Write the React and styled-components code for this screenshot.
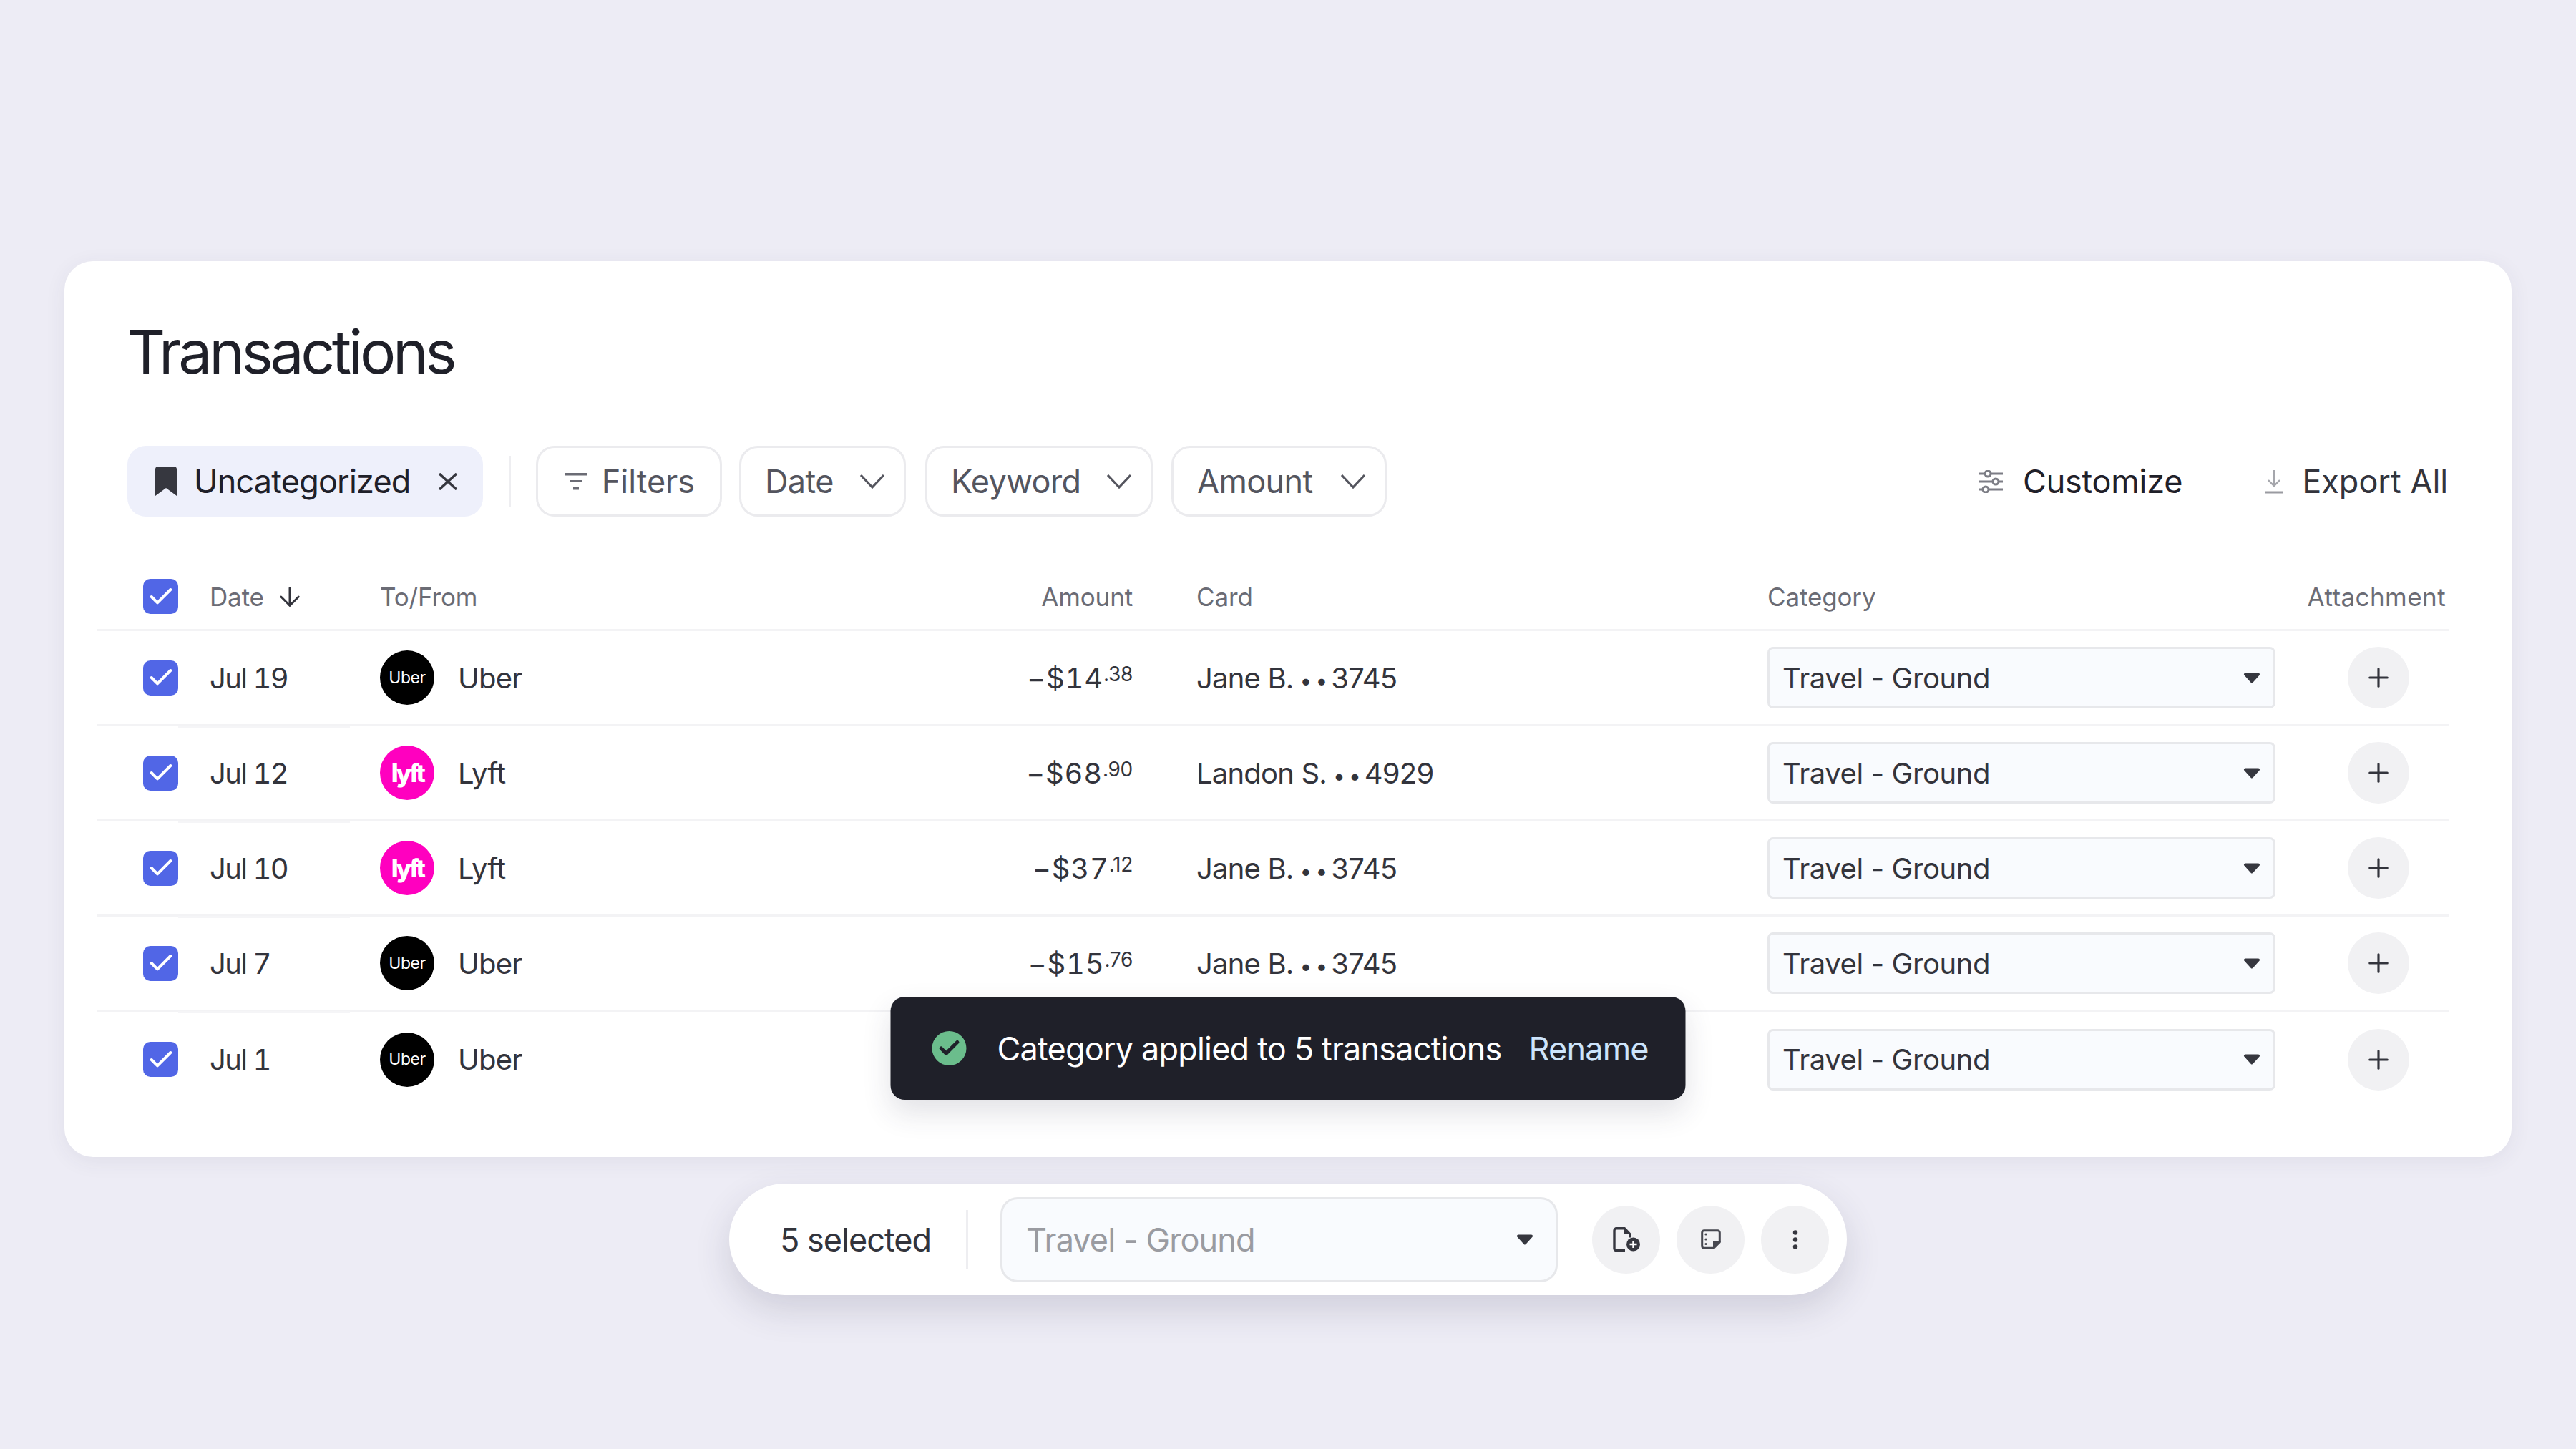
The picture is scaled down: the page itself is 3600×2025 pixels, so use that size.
import React from 'react';
import styled, { createGlobalStyle } from 'styled-components';
import { Check, Plus, ArrowDown } from 'lucide-react';

const GlobalStyle = createGlobalStyle`
  html, body {
    margin: 0;
    padding: 0;
    background: #edecf5;
  }
  body {
    font-family: Inter, "Liberation Sans", sans-serif;
    color: #33343c;
  }
`;

const Page = styled.div`
  width: 3600px;
  height: 2025px;
  padding-top: 365px;
  box-sizing: border-box;
  display: flex;
  flex-direction: column;
  align-items: center;
`;

const Card = styled.section`
  position: relative;
  width: 3420px;
  height: 1252px;
  box-sizing: border-box;
  padding: 77px 87px 0 45px;
  background: #fff;
  border-radius: 40px;
  box-shadow: 0 6px 30px rgba(50, 50, 80, 0.07);
`;

const Title = styled.h1`
  margin: 0;
  padding-left: 42px;
  font-size: 84px;
  line-height: 100px;
  font-weight: 400;
  letter-spacing: -0.052em;
  color: #1f2029;
`;

const Toolbar = styled.div`
  display: flex;
  align-items: center;
  height: 99px;
  margin-top: 81px;
  padding-left: 43px;
`;

const ActiveChip = styled.button`
  display: flex;
  align-items: center;
  flex-shrink: 0;
  width: 497px;
  height: 99px;
  padding: 0 35px 0 39px;
  box-sizing: border-box;
  border: 0;
  border-radius: 26px;
  background: #eef0fb;
  font: inherit;
  font-size: 45px;
  letter-spacing: -0.018em;
  color: #1f2029;

  svg:first-child {
    margin-right: 24px;
  }
  svg:last-child {
    margin-left: auto;
  }
`;

const VDivider = styled.span`
  display: block;
  flex-shrink: 0;
  width: 3px;
  height: ${(p) => p.$h}px;
  background: #eeeef1;
  margin: 0 ${(p) => p.$right}px 0 ${(p) => p.$left}px;
`;

const FilterButton = styled.button`
  display: flex;
  align-items: center;
  justify-content: space-between;
  flex-shrink: 0;
  width: ${(p) => p.$w}px;
  height: 99px;
  box-sizing: border-box;
  margin-right: ${(p) => p.$gap || 0}px;
  padding: 0 ${(p) => p.$pr || 26}px 0 ${(p) => p.$pl || 33}px;
  border: 3px solid #ebebee;
  border-radius: 26px;
  background: #fff;
  font: inherit;
  font-size: 45px;
  letter-spacing: ${(p) => p.$ls || '-0.014em'};
  color: #54555e;
`;

const ToolAction = styled.a`
  display: flex;
  align-items: center;
  flex-shrink: 0;
  gap: ${(p) => p.$gap}px;
  margin-left: ${(p) => p.$left || 0}px;
  font-size: 45px;
  white-space: nowrap;
  letter-spacing: ${(p) => p.$ls};
  color: ${(p) => p.$color};
`;

const Table = styled.div`
  margin-top: 68px;
`;

const rowColumns = `
  display: grid;
  grid-template-columns: 93px 238px 500px 552px 887px 710px 1fr;
  padding-left: 65px;
  align-items: center;
  box-sizing: border-box;
`;

const HeadRow = styled.div`
  ${rowColumns}
  height: 92px;
  padding-bottom: 2px;
  border-bottom: 3px solid #f3f3f5;
  font-size: 35px;
  letter-spacing: -0.004em;
  color: #6b6c75;
`;

const Row = styled.div`
  ${rowColumns}
  position: relative;
  height: 133px;
  border-bottom: ${(p) => (p.$last ? '0' : '3px solid #f3f3f5')};
  font-size: 40px;
  letter-spacing: -0.02em;
  color: #33343c;
`;

const DateEdge = styled.span`
  position: absolute;
  left: 114px;
  bottom: -5px;
  width: 240px;
  height: 3px;
  background: #f5f5f7;
`;

const CheckBox = styled.span`
  display: flex;
  align-items: center;
  justify-content: center;
  width: 49px;
  height: 49px;
  border-radius: 10px;
  background: #5166e6;
  color: #fff;
`;

const DateHead = styled.span`
  display: flex;
  align-items: center;
  gap: 15px;
  color: #6b6c75;

  svg {
    color: #33343c;
  }
`;

const RowDate = styled.span`
  font-variant-numeric: tabular-nums;
  letter-spacing: -0.04em;
`;

const Merchant = styled.span`
  display: flex;
  align-items: center;
  gap: 33px;
`;

const LogoCircle = styled.span`
  display: flex;
  align-items: center;
  justify-content: center;
  width: 76px;
  height: 76px;
  border-radius: 50%;
  background: ${(p) => (p.$kind === 'lyft' ? '#ff00bf' : '#000')};
  color: #fff;
  font-size: ${(p) => (p.$kind === 'lyft' ? 35 : 23)}px;
  font-weight: ${(p) => (p.$kind === 'lyft' ? 800 : 400)};
  letter-spacing: ${(p) => (p.$kind === 'lyft' ? '-0.1em' : '-0.02em')};
  line-height: 1;
`;

const RightCell = styled.span`
  text-align: right;
`;

const Dollars = styled.span`
  font-variant-numeric: tabular-nums;
  letter-spacing: 0.02em;
`;

const Cents = styled.sup`
  font-size: 28px;
  line-height: 0;
  vertical-align: 10px;
  letter-spacing: -0.01em;
`;

const CardCell = styled.span`
  padding-left: 89px;
`;

const Dots = styled.span`
  margin: 0 0 0 9px;
  font-size: 30px;
  letter-spacing: 5px;
`;

const Select = styled.div`
  display: flex;
  align-items: center;
  justify-content: space-between;
  box-sizing: border-box;
  height: ${(p) => p.$h}px;
  width: ${(p) => p.$w}px;
  padding: 0 ${(p) => p.$pr}px 0 ${(p) => p.$pl}px;
  border: 3px solid #e7e8eb;
  border-radius: ${(p) => p.$r}px;
  background: #f9fbfe;
  color: ${(p) => p.$color};
  font-size: ${(p) => p.$size}px;
  letter-spacing: ${(p) => p.$ls};
`;

const HeadRight = styled.span`
  text-align: right;
  padding-right: 5px;
  letter-spacing: 0.012em;
`;

const AttachCell = styled.span`
  display: flex;
  justify-content: flex-end;
  padding-right: 56px;
`;

const RoundButton = styled.button`
  display: flex;
  align-items: center;
  justify-content: center;
  width: ${(p) => p.$size}px;
  height: ${(p) => p.$size}px;
  padding: 0;
  border: 0;
  border-radius: 50%;
  background: #f1f1f3;
  color: #33343c;
`;

const Toast = styled.div`
  position: absolute;
  left: 50%;
  bottom: 80px;
  transform: translateX(-50%);
  display: flex;
  align-items: center;
  width: 1111px;
  height: 144px;
  box-sizing: border-box;
  padding-left: 58px;
  background: #1f2029;
  border-radius: 20px;
  box-shadow: 0 18px 40px rgba(50, 50, 80, 0.14);
  font-size: 45px;
  letter-spacing: -0.018em;
  color: #fff;
`;

const ToastCheck = styled.span`
  display: flex;
  align-items: center;
  justify-content: center;
  width: 48px;
  height: 48px;
  margin-right: 43px;
  border-radius: 50%;
  background: #6bbd8c;
  color: #1f2029;
`;

const Rename = styled.a`
  margin-left: 38px;
  color: #cde4fb;
`;

const Bar = styled.div`
  display: flex;
  align-items: center;
  width: 1562px;
  height: 156px;
  box-sizing: border-box;
  margin-top: 37px;
  padding: 0 24px 0 71px;
  background: #fff;
  border-radius: 78px;
  box-shadow: 0 20px 50px rgba(50, 50, 80, 0.16);
`;

const SelectedCount = styled.span`
  width: 210px;
  font-size: 45px;
  letter-spacing: -0.022em;
  white-space: nowrap;
  color: #33343c;
`;

const BarButtons = styled.div`
  display: flex;
  gap: 23px;
  margin-left: 48px;
`;

const SmallCaret = ({ w = 24, h = 15 }) => (
  <svg width={w} height={h} viewBox="0 0 24 15">
    <path d="M3 2.500h18L12 12.500z" fill="#36373f" stroke="#36373f" strokeWidth="4" strokeLinejoin="round" />
  </svg>
);

const Chevron = () => (
  <svg width="36" height="22" viewBox="0 0 36 22" fill="none" stroke="#54555e" strokeWidth="3.2">
    <path d="M2 2l16 17L34 2" />
  </svg>
);

const Bookmark = () => (
  <svg width="30" height="41" viewBox="0 0 30 41">
    <path d="M0 4a4 4 0 0 1 4-4h22a4 4 0 0 1 4 4v37L15 30 0 41z" fill="#36373f" />
  </svg>
);

const CloseIcon = () => (
  <svg width="28" height="24" viewBox="0 0 28 24" fill="none" stroke="#36373f" strokeWidth="3.4">
    <path d="M2 1l24 22M26 1L2 23" />
  </svg>
);

const FilterIcon = () => (
  <svg width="30" height="24" viewBox="0 0 30 24" fill="#6b6c75">
    <rect x="0" y="0" width="30" height="3.500" />
    <rect x="6" y="10" width="18" height="3" />
    <rect x="11" y="20" width="8" height="3.500" />
  </svg>
);

const SlidersIcon = () => (
  <svg width="34" height="32" viewBox="0 0 34 32" fill="none" stroke="#7c7d85" strokeWidth="3">
    <path d="M0 5h9M17 5h17M0 16h20M28 16h6M0 27h6M14 27h20" />
    <circle cx="13" cy="5" r="4" />
    <circle cx="24" cy="16" r="4" />
    <circle cx="10" cy="27" r="4" />
  </svg>
);

const ExportIcon = () => (
  <svg width="26" height="34" viewBox="0 0 26 34" fill="none" stroke="#a5a6ac" strokeWidth="2.400">
    <path d="M13 1v22M5 15l8 8 8-8" />
    <path d="M0 32h26" stroke="#9a9ba1" strokeWidth="3" />
  </svg>
);

const FileAddIcon = () => (
  <svg width="38" height="34" viewBox="0 0 38 34">
    <path d="M17 1.800H5a3 3 0 0 0-3 3v25a3 3 0 0 0 3 3h12" fill="none" stroke="#36373f" strokeWidth="3.400" />
    <path d="M15 .1h2l8 8.500v6h-3V9.500h-7z" fill="#36373f" />
    <circle cx="28.500" cy="24" r="9.500" fill="#36373f" />
    <path d="M28.500 19v10M23.500 24h10" stroke="#fff" strokeWidth="2.400" />
  </svg>
);

const NoteIcon = () => (
  <svg width="28" height="28" viewBox="0 0 28 28">
    <path d="M4.500 1.700h19a2.800 2.800 0 0 1 2.800 2.800v13.500l-8.300 8.300H4.500a2.800 2.800 0 0 1-2.800-2.800v-19a2.800 2.800 0 0 1 2.800-2.800z" fill="none" stroke="#46474f" strokeWidth="3" strokeLinejoin="round" />
    <path d="M17 27v-10h11z" fill="#46474f" />
    <circle cx="7" cy="7" r="1.600" fill="#46474f" />
    <circle cx="7" cy="14" r="1.600" fill="#46474f" />
    <circle cx="7" cy="20.500" r="1.600" fill="#46474f" />
  </svg>
);

const MoreIcon = () => (
  <svg width="8" height="27" viewBox="0 0 8 27" fill="#36373f">
    <circle cx="4" cy="3.500" r="3.200" />
    <circle cx="4" cy="13.500" r="3.200" />
    <circle cx="4" cy="23.500" r="3.200" />
  </svg>
);

const rows = [
  { date: 'Jul 19', name: 'Uber', dollars: '−$14', cents: '.38', holder: 'Jane B.', last4: '3745' },
  { date: 'Jul 12', name: 'Lyft', dollars: '−$68', cents: '.90', holder: 'Landon S.', last4: '4929' },
  { date: 'Jul 10', name: 'Lyft', dollars: '−$37', cents: '.12', holder: 'Jane B.', last4: '3745' },
  { date: 'Jul 7', name: 'Uber', dollars: '−$15', cents: '.76', holder: 'Jane B.', last4: '3745' },
  { date: 'Jul 1', name: 'Uber', dollars: '', cents: '', holder: '', last4: '' },
];

const Tick = () => <Check size={40} strokeWidth={2.4} />;

export default function App() {
  return (
    <Page>
      <GlobalStyle />
      <Card>
        <Title>Transactions</Title>
        <Toolbar>
          <ActiveChip>
            <Bookmark />
            Uncategorized
            <CloseIcon />
          </ActiveChip>
          <VDivider $h={72} $left={36} $right={35} />
          <FilterButton $w={260} $gap={24} $pl={38} $pr={35} $ls="0">
            <FilterIcon />
            Filters
          </FilterButton>
          <FilterButton $w={233} $gap={27}>
            Date
            <Chevron />
          </FilterButton>
          <FilterButton $w={318} $gap={26}>
            Keyword
            <Chevron />
          </FilterButton>
          <FilterButton $w={301}>
            Amount
            <Chevron />
          </FilterButton>
          <ToolAction $left={827} $gap={28} $color="#1f2029" $ls="-0.005em">
            <SlidersIcon />
            Customize
          </ToolAction>
          <ToolAction $left={115} $gap={26} $color="#33343c" $ls="0">
            <ExportIcon />
            Export All
          </ToolAction>
        </Toolbar>
        <Table>
          <HeadRow>
            <CheckBox><Tick /></CheckBox>
            <DateHead>Date <ArrowDown size={42} strokeWidth={1.7} /></DateHead>
            <span>To/From</span>
            <RightCell>Amount</RightCell>
            <CardCell>Card</CardCell>
            <span>Category</span>
            <HeadRight>Attachment</HeadRight>
          </HeadRow>
          {rows.map((row, i) => (
            <Row key={row.date} $last={i === rows.length - 1}>
              <CheckBox><Tick /></CheckBox>
              <RowDate>{row.date}</RowDate>
              <Merchant>
                <LogoCircle $kind={row.name.toLowerCase()}>{row.name === 'Lyft' ? 'lyft' : 'Uber'}</LogoCircle>
                {row.name}
              </Merchant>
              <RightCell><Dollars>{row.dollars}</Dollars><Cents>{row.cents}</Cents></RightCell>
              <CardCell>
                {row.holder}
                {row.last4 && <Dots>••</Dots>}
                {row.last4}
              </CardCell>
              <Select $w={710} $h={86} $r={8} $pl={18} $pr={18} $size={40} $ls="-0.01em" $color="#33343c">
                Travel - Ground
                <SmallCaret />
              </Select>
              <AttachCell>
                <RoundButton $size={86}><Plus size={42} strokeWidth={1.8} /></RoundButton>
              </AttachCell>
              {i < rows.length - 1 && <DateEdge />}
            </Row>
          ))}
        </Table>
        <Toast>
          <ToastCheck><Check size={34} strokeWidth={3.6} /></ToastCheck>
          Category applied to 5 transactions
          <Rename>Rename</Rename>
        </Toast>
      </Card>
      <Bar>
        <SelectedCount>5 selected</SelectedCount>
        <VDivider $h={83} $left={50} $right={45} />
        <Select $w={779} $h={119} $r={24} $pl={33} $pr={31} $size={45} $ls="-0.02em" $color="#9a9ba1">
          Travel - Ground
          <SmallCaret />
        </Select>
        <BarButtons>
          <RoundButton $size={95}><FileAddIcon /></RoundButton>
          <RoundButton $size={95}><NoteIcon /></RoundButton>
          <RoundButton $size={95}><MoreIcon /></RoundButton>
        </BarButtons>
      </Bar>
    </Page>
  );
}
